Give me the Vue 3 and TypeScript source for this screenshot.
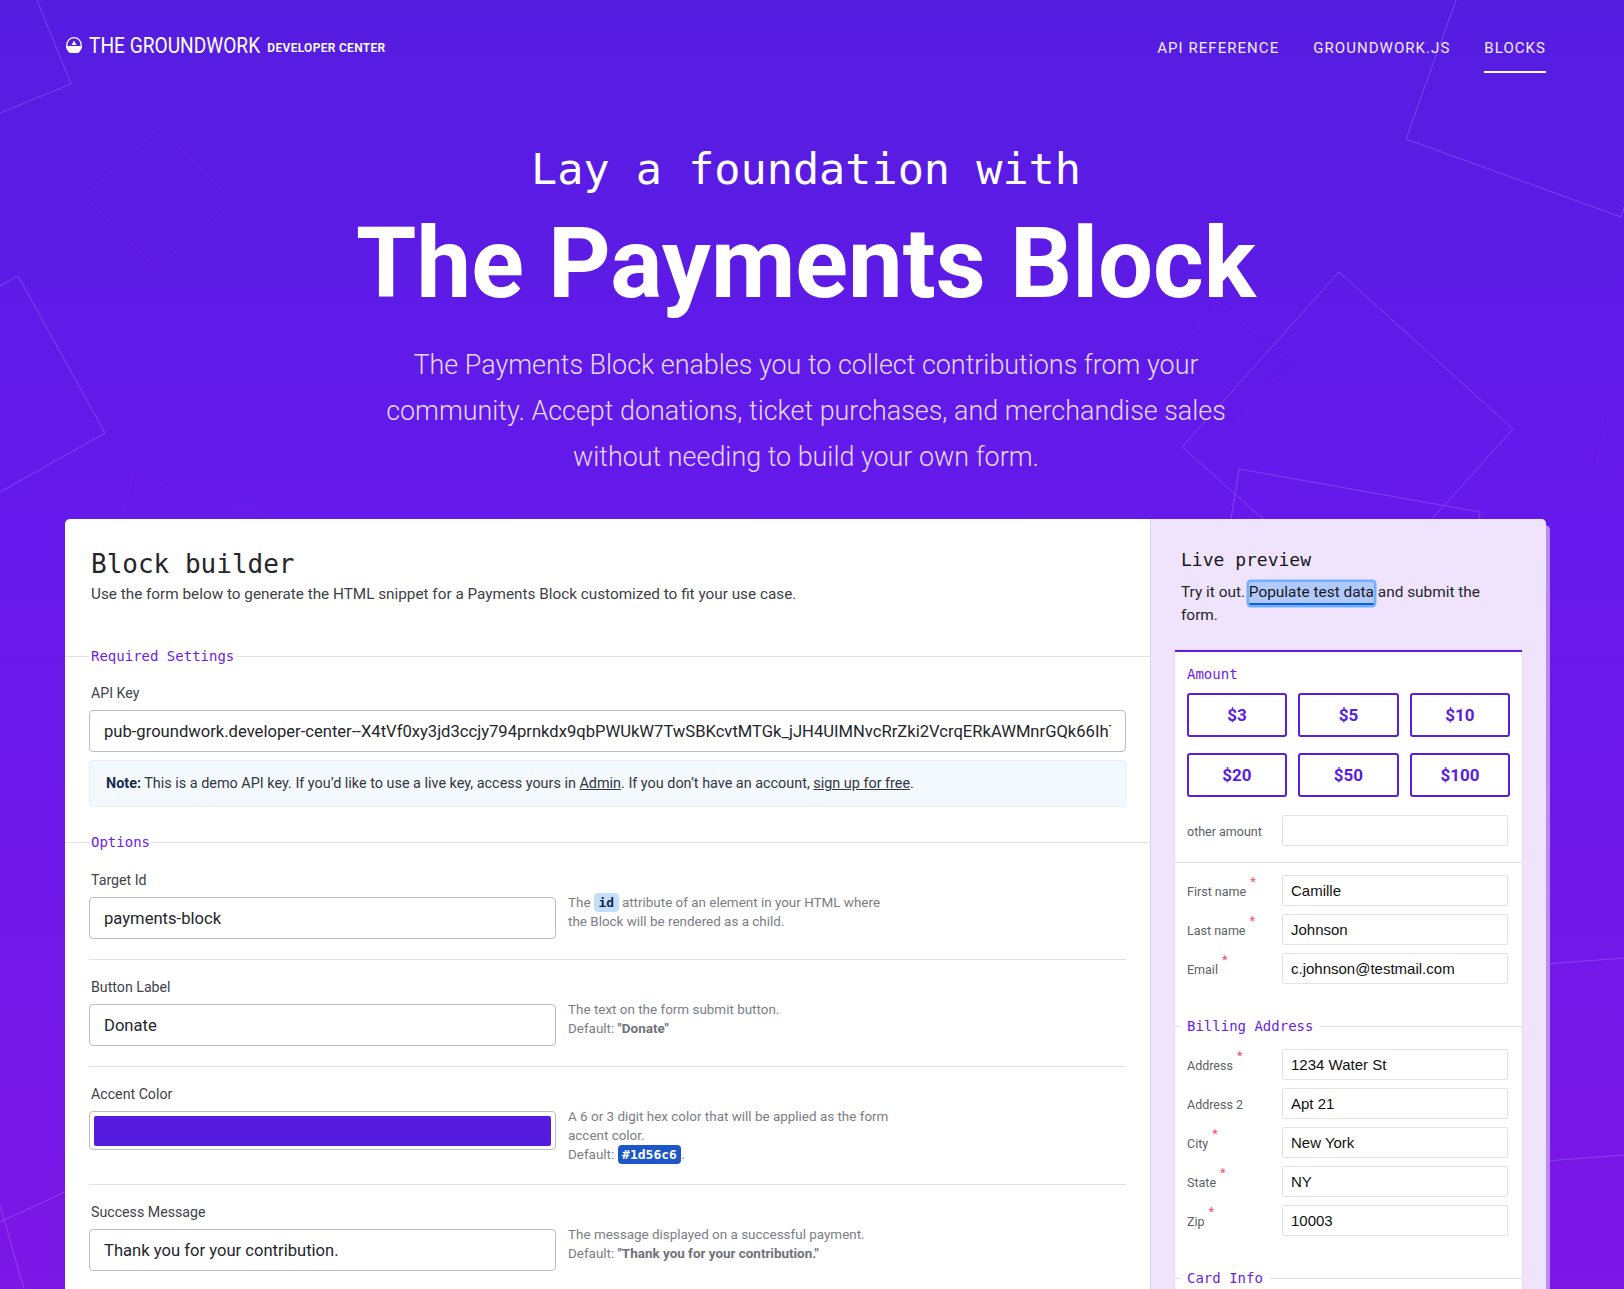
<script setup lang="ts">
const amounts: string[] = ['$3', '$5', '$10', '$20', '$50', '$100']
const contact = [
  { label: 'First name', value: 'Camille', req: true },
  { label: 'Last name', value: 'Johnson', req: true },
  { label: 'Email', value: 'c.johnson@testmail.com', req: true },
]
const billing = [
  { label: 'Address', value: '1234 Water St', req: true },
  { label: 'Address 2', value: 'Apt 21', req: false },
  { label: 'City', value: 'New York', req: true },
  { label: 'State', value: 'NY', req: true },
  { label: 'Zip', value: '10003', req: true },
]
const bright: string[] = [
  '37,0 71,84 0,113',
  '18,276 105,433 0,492',
  '0,286 18,276',
  '1456,0 1406,139 1621,217 1624,207',
  '1263,519 1182,447 1339,272 1513,429 1432,519',
  '1231,519 1239,469 1480,512 1479,519',
  '1546,964 1624,958',
  '1546,1161 1624,1155',
  '65,1192 0,1222',
  '0,1205 24,1289',
]
const faint: string[] = [
  '159,126 230,199 157,270 86,197 159,126',
  '121,519 133,476 258,513 257,519',
  '1218,302 1289,361 1230,433 1158,375 1218,302',
  '1624,405 1612,402 1597,462 1624,469',
]
</script>

<template>
  <div class="page">
    <svg class="shapes" width="1624" height="1289" viewBox="0 0 1624 1289" aria-hidden="true">
      <polyline v-for="p in faint" :key="p" :points="p" class="faint" />
      <polyline v-for="p in bright" :key="p" :points="p" class="bright" />
    </svg>

    <header class="nav">
      <div class="brand">
        <svg class="logo" width="16" height="16" viewBox="0 0 16 16">
          <circle cx="8" cy="8" r="7.300" fill="none" stroke="#fff" stroke-width="1.300" />
          <path d="M0 9h16a8 8 0 0 1-16 0z" fill="#fff" />
          <path d="M8 3.500l2.500 4.500H5.500z" fill="#fff" />
        </svg>
        <span class="wordmark">THE GROUNDWORK</span>
        <span class="sub">DEVELOPER CENTER</span>
      </div>
      <nav class="links">
        <a>API REFERENCE</a>
        <a>GROUNDWORK.JS</a>
        <a class="active">BLOCKS</a>
      </nav>
    </header>

    <section class="hero">
      <p class="kicker">Lay a foundation with</p>
      <h1>The Payments Block</h1>
      <p class="lead">The Payments Block enables you to collect contributions from your community. Accept donations, ticket purchases, and merchandise sales without needing to build your own form.</p>
    </section>

    <main class="card">
      <section class="builder">
        <h2>Block builder</h2>
        <p class="intro">Use the form below to generate the HTML snippet for a Payments Block customized to fit your use case.</p>

        <div class="legend first"><span>Required Settings</span></div>
        <label class="lbl">API Key</label>
        <input class="field" readonly value="pub-groundwork.developer-center--X4tVf0xy3jd3ccjy794prnkdx9qbPWUkW7TwSBKcvtMTGk_jJH4UIMNvcRrZki2VcrqERkAWMnrGQk66Ih7" />
        <div class="note"><b>Note:</b> This is a demo API key. If you’d like to use a live key, access yours in <u>Admin</u>. If you don’t have an account, <u>sign up for free</u>.</div>

        <div class="legend options"><span>Options</span></div>

        <div class="opt">
          <label class="lbl">Target Id</label>
          <div class="opt-row">
            <input class="field half" readonly value="payments-block" />
            <p class="help">The <code class="tag">id</code> attribute of an element in your HTML where the Block will be rendered as a child.</p>
          </div>
        </div>
        <div class="opt">
          <label class="lbl">Button Label</label>
          <div class="opt-row">
            <input class="field half" readonly value="Donate" />
            <p class="help">The text on the form submit button.<br />Default: <b>"Donate"</b></p>
          </div>
        </div>
        <div class="opt">
          <label class="lbl">Accent Color</label>
          <div class="opt-row">
            <div class="field half swatch"><i></i></div>
            <p class="help">A 6 or 3 digit hex color that will be applied as the form accent color.<br />Default: <code class="tag blue">#1d56c6</code>.</p>
          </div>
        </div>
        <div class="opt last">
          <label class="lbl">Success Message</label>
          <div class="opt-row">
            <input class="field half" readonly value="Thank you for your contribution." />
            <p class="help">The message displayed on a successful payment.<br />Default: <b>"Thank you for your contribution."</b></p>
          </div>
        </div>
      </section>

      <aside class="preview">
        <h3>Live preview</h3>
        <p class="try">Try it out. <a class="focus">Populate test data</a> and submit the form.</p>

        <div class="form">
          <div class="amount">
            <div class="mono-lbl">Amount</div>
            <div class="amt-grid">
              <button v-for="a in amounts" :key="a" type="button">{{ a }}</button>
            </div>
            <div class="row other">
              <label>other amount</label>
              <input readonly />
            </div>
          </div>
          <div class="group">
            <div v-for="f in contact" :key="f.label" class="row">
              <label>{{ f.label }}<sup v-if="f.req">*</sup></label>
              <input readonly :value="f.value" />
            </div>
          </div>
          <div class="legend small"><span>Billing Address</span></div>
          <div class="group billing">
            <div v-for="f in billing" :key="f.label" class="row">
              <label>{{ f.label }}<sup v-if="f.req">*</sup></label>
              <input readonly :value="f.value" />
            </div>
          </div>
          <div class="legend small card-info"><span>Card Info</span></div>
        </div>
      </aside>
    </main>
  </div>
</template>

<style>
html, body { margin: 0; padding: 0; }
body { height: 1289px; overflow: hidden; }
</style>

<style scoped>
.page {
  position: relative;
  height: 1289px;
  overflow: hidden;
  background: linear-gradient(180deg, #541de0 0%, #6619ec 42%, #7c17e6 100%);
  font-family: "Roboto", sans-serif;
  color: #fff;
}
.shapes { position: absolute; left: 0; top: 0; }
.shapes polyline { fill: none; stroke-width: 1; }
.bright { stroke: rgba(190, 140, 255, 0.35); }
.faint { stroke: #6f1ce6; }

.nav {
  position: relative;
  display: flex;
  justify-content: space-between;
  padding: 0 78px 0 66px;
  height: 126px;
}
.brand { display: flex; align-items: flex-start; padding-top: 33px; }
.logo { margin-top: 4px; flex: none; }
.wordmark {
  display: inline-block;
  font-size: 22.500px;
  font-weight: 400;
  line-height: 24px;
  margin-left: 7px;
  margin-right: -30px;
  transform: scaleX(0.85);
  transform-origin: left center;
  white-space: nowrap;
}
.sub { font-size: 12px; font-weight: 600; letter-spacing: 0.3px; margin: 5px 0 0 7px; line-height: 20px; }
.links { display: flex; gap: 34px; padding-top: 38px; }
.links a {
  font-size: 15px;
  letter-spacing: 1.050px;
  line-height: 20px;
  height: 35px;
  color: #f1eaff;
}
.links a.active { border-bottom: 2px solid #fff; height: 33px; }

.hero { position: relative; text-align: center; padding-right: 12px; }
.kicker {
  margin: 17px 0 0;
  font-family: "DejaVu Sans Mono", monospace;
  font-size: 43.500px;
  line-height: 52px;
}
h1 {
  margin: 14px 0 0;
  font-size: 97.500px;
  line-height: 110px;
  font-weight: 700;
}
.lead {
  width: 860px;
  margin: 23px auto 0;
  font-size: 26.900px;
  line-height: 46px;
  font-weight: 300;
  color: #e6d8ff;
}

.card {
  position: relative;
  margin: 39px 0 0 65px;
  width: 1481px;
  height: 900px;
  display: flex;
  background: #fff;
  border-radius: 5px 5px 0 0;
  box-shadow: 4px 6px 0 #b88cf2;
  color: #24262b;
}
.builder { flex: 1; min-width: 0; padding: 0 24px; }
h2 {
  margin: 30px 0 0 2px;
  font-family: "DejaVu Sans Mono", monospace;
  font-size: 26px;
  line-height: 30px;
  font-weight: 400;
}
.intro { margin: 4px 0 0 2px; font-size: 15.300px; line-height: 22px; color: #3c3f45; }

.legend {
  display: flex;
  align-items: center;
  height: 20px;
  font-family: "DejaVu Sans Mono", monospace;
  font-size: 14px;
  color: #6a1ee8;
  margin: 0 -24px;
}
.legend::before { content: ""; width: 24px; margin-right: 2px; height: 1px; background: #e1e2e6; flex: none; }
.legend::after { content: ""; flex: 1; height: 1px; background: #e1e2e6; margin-left: 2px; }
.legend.first { margin-top: 41px; }
.legend.options { margin-top: 25px; }

.lbl { display: block; font-size: 14.200px; line-height: 20px; color: #40434a; margin: 17px 0 7px 2px; }
.legend.options + .opt .lbl { margin-top: 18px; }
.field {
  display: block;
  box-sizing: border-box;
  width: 100%;
  height: 42px;
  padding: 0 14px;
  border: 1px solid #bcbcc2;
  border-radius: 4px;
  background: #fff;
  font-family: "Roboto", sans-serif;
  font-size: 16.600px;
  color: #24262b;
  outline: none;
}
.note {
  margin-top: 8px;
  height: 47px;
  box-sizing: border-box;
  padding: 0 16px;
  line-height: 45px;
  background: #f4f9fe;
  border: 1px solid #e6eff8;
  border-radius: 4px;
  font-size: 14.400px;
  color: #33373f;
}
.note b { color: #16294a; }

.opt { border-bottom: 1px solid #e1e2e6; padding-bottom: 20px; }
.opt.last { border: 0; }
.opt-row { display: flex; align-items: flex-start; }
.half { width: 467px; flex: none; }
.swatch { padding: 4px; height: 39px; }
.swatch i { display: block; height: 30px; background: #551ce0; border-radius: 2px; }
.help {
  margin: -4px 0 0 12px;
  width: 325px;
  font-size: 13.450px;
  line-height: 19px;
  color: #7b7e85;
}
.help b { color: #6f7278; }
.tag {
  display: inline-block;
  vertical-align: top;
  font-family: "DejaVu Sans Mono", monospace;
  font-size: 13px;
  font-weight: 700;
  line-height: 19px;
  padding: 0 4.500px;
  border-radius: 4px;
  background: #c5defc;
  color: #16294a;
}
.tag.blue { background: #1d56c6; color: #fff; }

.preview {
  width: 396px;
  flex: none;
  box-sizing: border-box;
  background: #efe4fc;
  border-left: 1px solid #dcd5ee;
  border-radius: 0 5px 0 0;
  padding: 29px 24px 0;
}
h3 {
  margin: 0 0 0 6px;
  font-family: "DejaVu Sans Mono", monospace;
  font-size: 18px;
  line-height: 24px;
  font-weight: 400;
  color: #17181c;
}
.try { margin: 9px 0 0 6px; width: 310px; font-size: 15.400px; line-height: 23px; color: #24262b; }
.focus {
  display: inline-block;
  line-height: 21px;
  margin-bottom: -2px;
  background: #b2c9fb;
  color: #17181c;
  border-bottom: 2px solid #0a5de0;
  box-shadow: 0 0 0 2.500px #6fb0ff;
  border-radius: 2px;
}

.form {
  margin-top: 23px;
  background: #fff;
  border-top: 2px solid #5a1ee0;
  box-shadow: 0 0 2px #cfc3e8;
  height: 760px;
}
.amount { padding: 12px 12px 0; border-bottom: 1px solid #e1e2e6; height: 211px; box-sizing: border-box; margin-bottom: 12px; }
.mono-lbl { font-family: "DejaVu Sans Mono", monospace; font-size: 14px; line-height: 20px; color: #6a1ee8; }
.amt-grid { display: grid; grid-template-columns: 100px 101px 100px; column-gap: 11px; row-gap: 16px; margin-top: 9px; }
.amt-grid button {
  height: 44px;
  background: #fff;
  border: 2px solid #5a1ee0;
  border-radius: 3px;
  color: #5a1ee0;
  font-family: "Roboto", sans-serif;
  font-size: 17px;
  font-weight: 700;
  padding: 0;
}
.row { display: flex; align-items: center; height: 31px; margin: 0 14px 8px 12px; }
.row.other { margin: 18px 2px 0 0; }
.row label { width: 95px; flex: none; font-size: 12.500px; color: #5c5f66; padding-top: 2px; }
.row sup { color: #f2516b; font-size: 13px; position: relative; top: -10px; line-height: 0; vertical-align: baseline; margin-left: 4px; }
.row input {
  flex: 1;
  min-width: 0;
  box-sizing: border-box;
  height: 31px;
  border: 1px solid #e3e3e7;
  border-radius: 2px;
  padding: 0 8px;
  font-family: "Liberation Sans", sans-serif;
  font-size: 15px;
  color: #111;
  background: #fff;
  outline: none;
}
.legend.small { margin: 32px 0 0; }
.legend.small::before { width: 6px; margin-right: 6px; }
.legend.small::after { margin-left: 7px; }
.group.billing { margin-top: 13px; }
.legend.card-info { margin-top: 32px; }
</style>
